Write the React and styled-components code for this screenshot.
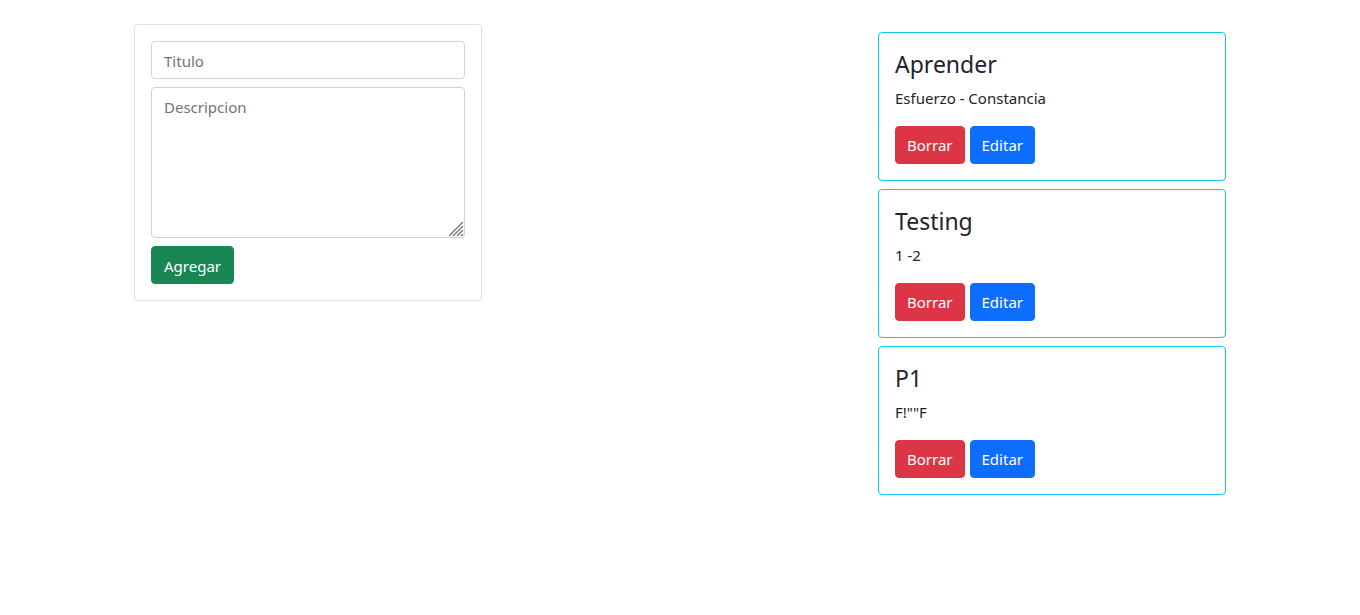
import React, { useState } from 'react';
import styled, { createGlobalStyle } from 'styled-components';

const GlobalStyle = createGlobalStyle`
  *, *::before, *::after { box-sizing: border-box; }
  body {
    margin: 0;
    background: #fff;
    color: #212529;
    font: 400 15px/24px 'Segoe UI', 'Noto Sans', 'Open Sans', sans-serif;
  }
`;

const Container = styled.main`
  width: 100%;
  max-width: 1140px;
  margin: 0 auto;
  padding: 24px;
`;

const Columns = styled.div`
  display: grid;
  grid-template-columns: repeat(3, 1fr);
  column-gap: 24px;
  align-items: start;
`;

const FormCard = styled.form`
  display: flex;
  flex-direction: column;
  align-items: flex-start;
  gap: 8px;
  padding: 16px;
  border: 1px solid #dfdfdf;
  border-radius: 4px;
`;

const TextField = styled.input`
  display: block;
  width: 100%;
  padding: 7px 12px 5px;
  border: 1px solid #ced4da;
  border-radius: 4px;
  background: #fff;
  color: inherit;
  font: inherit;
  &::placeholder { color: #6c757d; opacity: 1; }
`;

const grip = encodeURIComponent(
  '<svg xmlns="http://www.w3.org/2000/svg" width="15" height="15" viewBox="0 0 15 15"><path d="M0 14 14 0M4 14 14 4M8 14 14 8M12 14 14 12" stroke="#787878" stroke-width="1.4" fill="none"/></svg>'
);

const TextArea = styled(TextField)`
  height: 151px;
  resize: vertical;
  &::-webkit-resizer {
    background: url("data:image/svg+xml,${grip}") no-repeat right bottom;
  }
`;

const TaskList = styled.section`
  grid-column: 3;
  display: flex;
  flex-direction: column;
  gap: 8px;
  padding-top: 8px;
`;

const TaskCard = styled.article`
  padding: 16px;
  border: 1px solid #0dcaf0;
  border-radius: 4px;
`;

const TaskTitle = styled.h4`
  margin: 0 0 7px;
  padding-top: 1px;
  font-size: 23px;
  font-weight: 400;
  line-height: 29px;
`;

const TaskText = styled.p`
  margin: 0 0 16px;
`;

const Actions = styled.div`
  display: flex;
  gap: 5px;
`;

const colors = { success: '#198754', danger: '#dc3545', primary: '#0d6efd' };

const Button = styled.button`
  padding: 7px 12px 5px;
  border: 1px solid ${({ $variant }) => colors[$variant]};
  border-radius: 4px;
  background: ${({ $variant }) => colors[$variant]};
  color: #fff;
  font: inherit;
  cursor: pointer;
`;

const TaskButton = styled(Button)`
  padding: 6px 11px;
`;

const initialTasks = [
  { id: 1, title: 'Aprender', description: 'Esfuerzo - Constancia' },
  { id: 2, title: 'Testing', description: '1 -2' },
  { id: 3, title: 'P1', description: 'F!""F' },
];

export default function App() {
  const [tasks, setTasks] = useState(initialTasks);
  const [draft, setDraft] = useState({ id: null, title: '', description: '' });

  const change = (e) => setDraft({ ...draft, [e.target.name]: e.target.value });

  const submit = (e) => {
    e.preventDefault();
    if (!draft.title) return;
    setTasks(
      draft.id
        ? tasks.map((t) => (t.id === draft.id ? draft : t))
        : [...tasks, { ...draft, id: Date.now() }]
    );
    setDraft({ id: null, title: '', description: '' });
  };

  return (
    <>
      <GlobalStyle />
      <Container>
        <Columns>
          <FormCard onSubmit={submit}>
            <TextField
              name="title"
              aria-label="Titulo"
              placeholder="Titulo"
              value={draft.title}
              onChange={change}
            />
            <TextArea
              as="textarea"
              name="description"
              aria-label="Descripcion"
              placeholder="Descripcion"
              value={draft.description}
              onChange={change}
            />
            <Button type="submit" $variant="success">Agregar</Button>
          </FormCard>
          <TaskList>
            {tasks.map((task) => (
              <TaskCard key={task.id}>
                <TaskTitle>{task.title}</TaskTitle>
                <TaskText>{task.description}</TaskText>
                <Actions>
                  <TaskButton
                    type="button"
                    $variant="danger"
                    onClick={() => setTasks(tasks.filter((t) => t.id !== task.id))}
                  >
                    Borrar
                  </TaskButton>
                  <TaskButton type="button" $variant="primary" onClick={() => setDraft(task)}>
                    Editar
                  </TaskButton>
                </Actions>
              </TaskCard>
            ))}
          </TaskList>
        </Columns>
      </Container>
    </>
  );
}
